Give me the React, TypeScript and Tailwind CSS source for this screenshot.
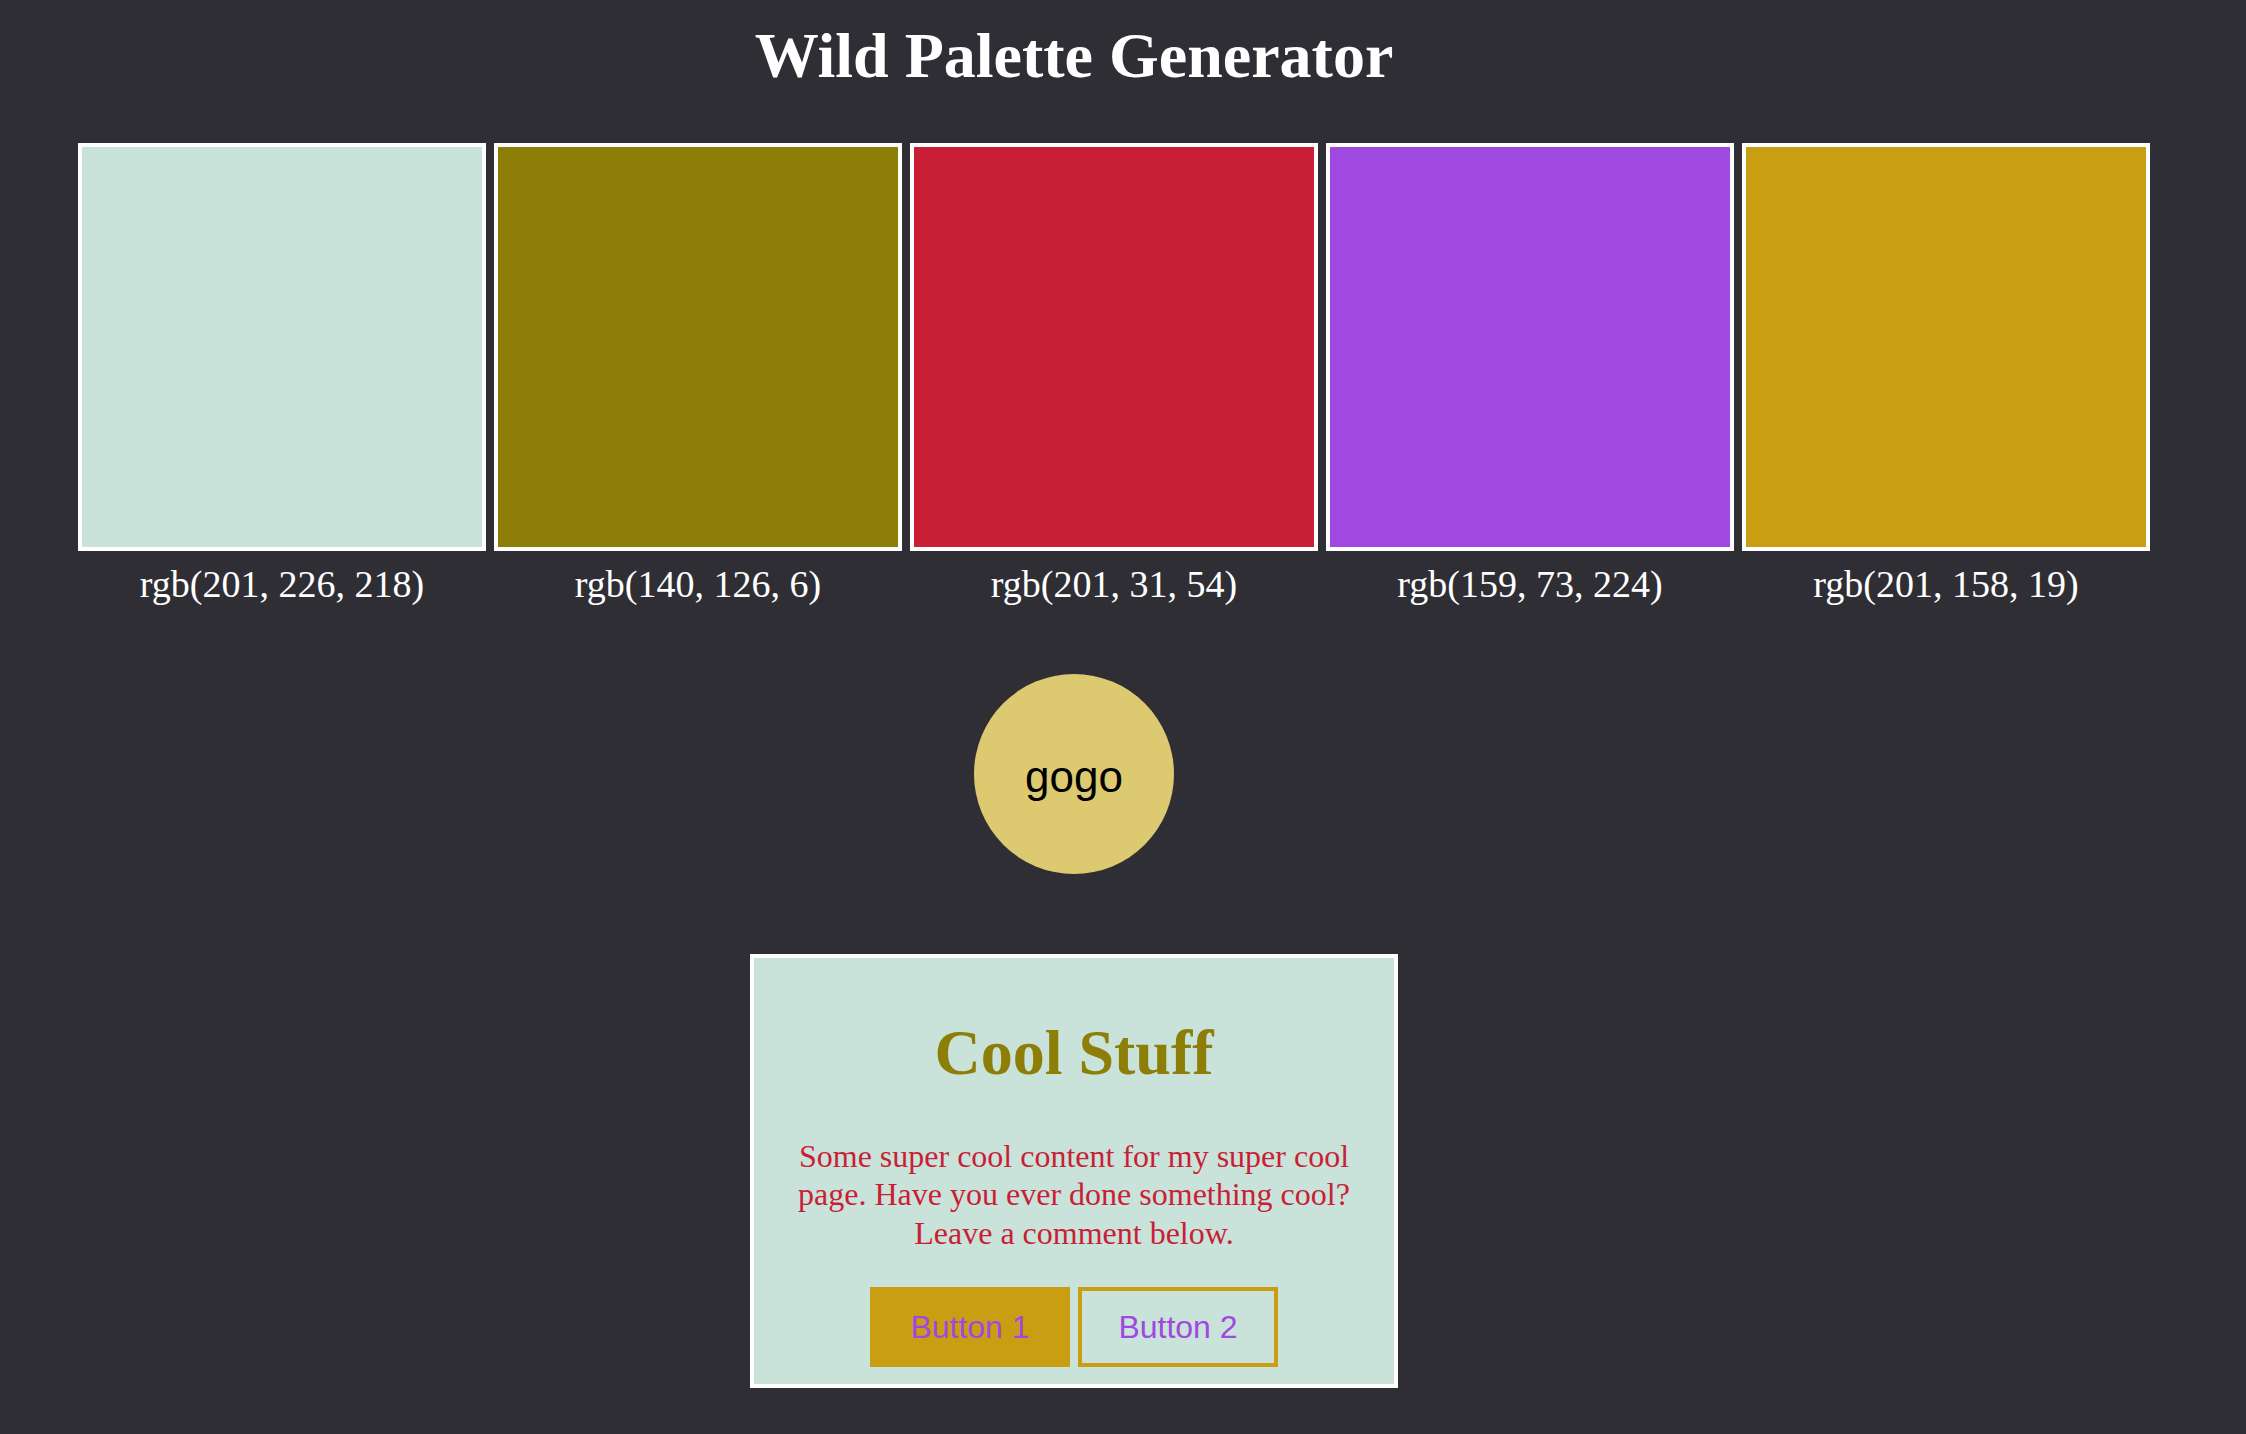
const SWATCHES = [
  { rgb: "rgb(201, 226, 218)", bg: "bg-[#c9e2da]" },
  { rgb: "rgb(140, 126, 6)", bg: "bg-[#8c7e06]" },
  { rgb: "rgb(201, 31, 54)", bg: "bg-[#c91f36]" },
  { rgb: "rgb(159, 73, 224)", bg: "bg-[#9f49e0]" },
  { rgb: "rgb(201, 158, 19)", bg: "bg-[#c99e13]" },
];

const serif = "font-['Liberation_Serif','Times_New_Roman',serif]";
const sans = "font-['Liberation_Sans',Arial,sans-serif]";

export default function App() {
  return (
    <div className="min-h-screen bg-[#2f2e35]">
      <div className="flex w-[2148px] flex-col items-center">
        <h1 className={`${serif} pt-[24px] text-[64px] font-bold leading-none text-white`}>
          Wild Palette Generator
        </h1>

        {/* palette row */}
        <div className="mt-[55px] flex gap-[8px] self-start pl-[78px]">
          {SWATCHES.map((s) => (
            <div key={s.rgb} className="flex w-[408px] flex-col items-center">
              <div className={`h-[408px] w-[408px] border-[4px] border-white ${s.bg}`} />
              <p className={`${serif} mt-[14px] text-[38px] leading-none text-white`}>{s.rgb}</p>
            </div>
          ))}
        </div>

        <button
          className={`${sans} mt-[71px] flex h-[200px] w-[200px] items-center justify-center rounded-full bg-[#dcc970] pt-[6px] text-[44px] text-black`}
        >
          gogo
        </button>

        <section className="mt-[80px] flex w-[648px] flex-col items-center border-[4px] border-white bg-[#c9e2da] px-[40px] pt-[63px] pb-[17px]">
          <h2 className={`${serif} text-[64px] font-bold leading-none text-[#8c7e06]`}>Cool Stuff</h2>
          <p className={`${serif} mt-[52px] text-center text-[32px] leading-[38.4px] text-[#c91f36]`}>
            Some super cool content for my super cool page. Have you ever done something cool?
            Leave a comment below.
          </p>
          <div className="mt-[35px] flex gap-[8px]">
            <button
              className={`${sans} flex h-[80px] w-[200px] items-center justify-center bg-[#c99e13] text-[32px] text-[#9f49e0]`}
            >
              Button 1
            </button>
            <button
              className={`${sans} flex h-[80px] w-[200px] items-center justify-center border-[4px] border-[#c99e13] text-[32px] text-[#9f49e0]`}
            >
              Button 2
            </button>
          </div>
        </section>
      </div>
    </div>
  );
}
